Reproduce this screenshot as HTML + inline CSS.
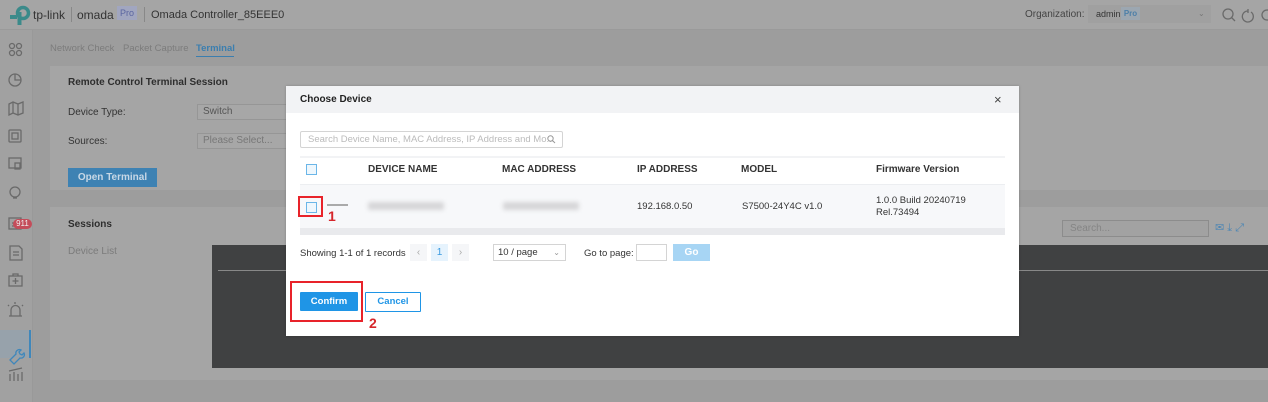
<!DOCTYPE html>
<html><head><meta charset="utf-8"><style>
*{box-sizing:border-box;margin:0;padding:0}
body{width:1268px;height:402px;overflow:hidden;font-family:"Liberation Sans",sans-serif;background:#9d9d9d;position:relative;font-size:11px;color:#333}
.abs{position:absolute}
.hdr{left:0;top:0;width:1268px;height:30px;background:#a5a5a5;border-bottom:1px solid #9a9a9a}
.side{left:0;top:30px;width:32px;height:372px;background:#a1a1a1}
.card{background:#a5a5a5}
.lbl{color:#333;font-size:10px}
.inp{background:#a7a7a7;border:1px solid #969696;height:16px;font-size:10px;color:#555;padding-left:5px;line-height:14px}
.modal{left:286px;top:86px;width:733px;height:250px;background:#fff;box-shadow:0 0 3px rgba(0,0,0,.2)}
.th{font-weight:bold;font-size:10px;color:#333;top:164px}
.cb{width:11px;height:11px;border:1px solid #6bb6e8;background:#eef7fd}
.blur{background:#d6d6d8;height:8px;filter:blur(2px);border-radius:2px}
.red{border:2px solid #e8232a}
.rn{color:#d6262b;font-weight:bold;font-size:14px}
.ic{stroke:#6a6a6a;fill:none;stroke-width:1.3}
</style></head><body>
<div class="abs hdr"></div>
<svg class="abs" style="left:9px;top:5px" width="22" height="20"><circle cx="14" cy="8" r="5.5" fill="none" stroke="#3b8a8a" stroke-width="3.5"/><rect x="8.5" y="7" width="4" height="13" fill="#3b8a8a"/><rect x="1" y="10" width="7" height="4" fill="#3b8a8a"/></svg>
<div class="abs" style="left:33px;top:8px;font-size:12px;color:#333">tp-link</div>
<div class="abs" style="left:71px;top:7px;width:1px;height:15px;background:#888"></div>
<div class="abs" style="left:77px;top:8px;font-size:12px;color:#333">omada</div>
<div class="abs" style="left:117px;top:6px;width:20px;height:14px;background:#a1a6c0;color:#5a65a0;font-size:9px;text-align:center;line-height:14px">Pro</div>
<div class="abs" style="left:144px;top:7px;width:1px;height:15px;background:#888"></div>
<div class="abs" style="left:151px;top:9px;font-size:11px;color:#333">Omada Controller_85EEE0</div>
<div class="abs" style="left:1025px;top:9px;font-size:10px;color:#444">Organization:</div>
<div class="abs" style="left:1088px;top:5px;width:123px;height:18px;background:#a0a0a0"></div>
<div class="abs" style="left:1096px;top:9px;font-size:9px;color:#333">admin</div>
<div class="abs" style="left:1121px;top:7px;width:19px;height:13px;background:#9ca7b1;color:#4c7fa8;font-size:8px;text-align:center;line-height:13px;font-weight:bold">Pro</div>
<div class="abs" style="left:1198px;top:9px;font-size:8px;color:#777">⌄</div>
<svg class="abs" style="left:1221px;top:7px" width="47" height="16"><circle cx="7" cy="7" r="5" class="ic"/><path d="M10.5 10.5 14 14" class="ic"/><path d="M27 4a5.5 5.5 0 1 0 3 1M27 2v4" class="ic"/><circle cx="46" cy="8" r="5" class="ic"/></svg>
<div class="abs side"></div>
<div class="abs" style="left:32px;top:30px;width:1px;height:372px;background:#999"></div>
<div class="abs" style="left:0;top:330px;width:31px;height:28px;background:#97a2ab;border-right:2px solid #3f87bb"></div>
<svg class="abs" style="left:6px;top:40px" width="20" height="345">
<g class="ic"><circle cx="6" cy="6" r="2.5"/><circle cx="13" cy="6" r="2.5"/><circle cx="6" cy="13" r="2.5"/><circle cx="13" cy="13" r="2.5"/>
<circle cx="9" cy="40" r="6"/><path d="M9 34v6h6"/>
<path d="M3 64l4-2 5 2 5-2v11l-5 2-5-2-4 2zM7 62v11M12 64v11"/>
<rect x="3" y="90" width="12" height="12" rx="1"/><rect x="6" y="93" width="6" height="6"/>
<rect x="3" y="118" width="12" height="10"/><rect x="9" y="123" width="5" height="6"/>
<circle cx="9" cy="152" r="5"/><path d="M7 158h4"/>
<rect x="3" y="178" width="12" height="11"/><path d="M6 183h6M6 186h6"/>
<path d="M4 206h9l3 3v11H4z M7 212h6M7 215h6"/>
<rect x="3" y="236" width="13" height="10"/><path d="M7 236v-2h5v2M9.5 238v6M6.5 241h6"/>
<path d="M3 276h13M5 276v-6a4.5 4.5 0 0 1 9 0v6M9 264v-2M3 266l-1-1M16 266l1-1"/>
<path d="M4 320l6-6a3.5 3.5 0 0 1 5-4l-2 2 1 2 2 1 2-2a3.5 3.5 0 0 1-4 5l-6 6z" stroke="#3f87bb"/>
<path d="M4 341v-7M8 341v-9M12 341v-7M16 341v-9M3 331l13-3"/></g></svg>
<div class="abs" style="left:13px;top:219px;width:19px;height:10px;background:#c44c5a;color:#eee;font-size:8px;border-radius:5px;text-align:center;line-height:10px">911</div>
<div class="abs" style="left:50px;top:43px;font-size:9.5px;color:#7c7c7c">Network Check</div>
<div class="abs" style="left:123px;top:43px;font-size:9.5px;color:#7c7c7c">Packet Capture</div>
<div class="abs" style="left:196px;top:43px;font-size:9.5px;color:#3b7eaf;font-weight:bold">Terminal</div>
<div class="abs" style="left:196px;top:56px;width:38px;height:1px;background:#3b7eaf"></div>
<div class="abs card" style="left:50px;top:66px;width:1218px;height:124px"></div>
<div class="abs" style="left:68px;top:77px;font-weight:bold;font-size:10px;color:#2e2e2e">Remote Control Terminal Session</div>
<div class="abs lbl" style="left:68px;top:107px">Device Type:</div>
<div class="abs inp" style="left:197px;top:104px;width:100px">Switch</div>
<div class="abs lbl" style="left:68px;top:136px">Sources:</div>
<div class="abs inp" style="left:197px;top:133px;width:100px;color:#777">Please Select...</div>
<div class="abs" style="left:68px;top:168px;width:89px;height:19px;background:#3e82b3;color:#c8d8e6;font-weight:bold;font-size:10px;text-align:center;line-height:19px">Open Terminal</div>
<div class="abs card" style="left:50px;top:207px;width:1218px;height:173px"></div>
<div class="abs" style="left:68px;top:219px;font-weight:bold;font-size:10px;color:#2e2e2e">Sessions</div>
<div class="abs" style="left:68px;top:246px;font-size:10px;color:#7b7b7b">Device List</div>
<div class="abs" style="left:1062px;top:220px;width:147px;height:17px;border:1px solid #8c8c8c;background:#a2a2a2;font-size:10px;color:#858585;padding-left:7px;line-height:15px">Search...</div>
<div class="abs" style="left:1215px;top:221px;font-size:11px;color:#4d86b4">✉ ⤓ ⤢</div>
<div class="abs" style="left:212px;top:245px;width:1056px;height:123px;background:#404142"></div>
<div class="abs" style="left:218px;top:270px;width:1050px;height:1px;background:#888"></div>
<div class="abs modal">
<div class="abs" style="left:0;top:0;width:733px;height:27px;background:#f2f3f5"></div>
<div class="abs" style="left:14px;top:8px;font-weight:bold;font-size:10px;color:#222">Choose Device</div>
<div class="abs" style="left:708px;top:6px;font-size:13px;color:#444">×</div>
<div class="abs" style="left:14px;top:45px;width:263px;height:17px;border:1px solid #d4d4d4;border-radius:2px;font-size:9.5px;color:#bbb;padding-left:7px;line-height:15px">Search Device Name, MAC Address, IP Address and Mo...</div>
<svg class="abs" style="left:261px;top:49px" width="9" height="9"><circle cx="3.5" cy="3.5" r="2.7" fill="none" stroke="#999"/><path d="M5.5 5.5 8 8" stroke="#999"/></svg>
<div class="abs" style="left:14px;top:70px;width:705px;height:2px;background:#f2f3f5"></div>
<div class="abs cb" style="left:20px;top:78px"></div>
<div class="abs" style="left:14px;top:98px;width:705px;height:44px;background:#f7f8fa;border-top:1px solid #eceef1"></div>
<div class="abs" style="left:14px;top:142px;width:705px;height:7px;background:#e9eaed"></div>
<div class="abs red" style="left:12px;top:110px;width:25px;height:21px"></div>
<div class="abs cb" style="left:20px;top:116px"></div>
<div class="abs" style="left:41px;top:118px;width:21px;height:2px;background:#aaa"></div>
<div class="abs rn" style="left:42px;top:122px">1</div>
<div class="abs blur" style="left:82px;top:116px;width:76px"></div>
<div class="abs blur" style="left:217px;top:116px;width:76px"></div>
<div class="abs" style="left:351px;top:115px;font-size:9.5px">192.168.0.50</div>
<div class="abs" style="left:456px;top:115px;font-size:9.5px">S7500-24Y4C v1.0</div>
<div class="abs" style="left:590px;top:109px;font-size:9.5px;line-height:12px">1.0.0 Build 20240719<br>Rel.73494</div>
</div>
<div class="abs th" style="left:368px">DEVICE NAME</div>
<div class="abs th" style="left:502px">MAC ADDRESS</div>
<div class="abs th" style="left:637px">IP ADDRESS</div>
<div class="abs th" style="left:741px">MODEL</div>
<div class="abs th" style="left:876px">Firmware Version</div>
<div class="abs" style="left:300px;top:248px;font-size:9.5px;color:#333">Showing 1-1 of 1 records</div>
<div class="abs" style="left:410px;top:244px;width:17px;height:17px;background:#f5f6f8;color:#aaa;text-align:center;line-height:17px;font-size:10px">‹</div>
<div class="abs" style="left:431px;top:244px;width:17px;height:17px;background:#e6f3fd;color:#3a9ae0;text-align:center;line-height:17px;font-size:10px">1</div>
<div class="abs" style="left:452px;top:244px;width:17px;height:17px;background:#f5f6f8;color:#aaa;text-align:center;line-height:17px;font-size:10px">›</div>
<div class="abs" style="left:493px;top:244px;width:73px;height:17px;border:1px solid #d4d4d4;font-size:9.5px;color:#333;padding-left:4px;line-height:15px">10 / page<span style="position:absolute;right:5px;color:#999;font-size:8px">⌄</span></div>
<div class="abs" style="left:584px;top:248px;font-size:9.5px;color:#333">Go to page:</div>
<div class="abs" style="left:636px;top:244px;width:31px;height:17px;border:1px solid #d4d4d4"></div>
<div class="abs" style="left:673px;top:244px;width:37px;height:17px;background:#a7d5f4;color:#fff;text-align:center;line-height:17px;font-size:10px;font-weight:bold">Go</div>
<div class="abs red" style="left:290px;top:281px;width:73px;height:41px"></div>
<div class="abs" style="left:300px;top:292px;width:58px;height:19px;background:#1f95e6;color:#fff;font-weight:bold;font-size:9.5px;text-align:center;line-height:19px;border-radius:1px">Confirm</div>
<div class="abs" style="left:365px;top:292px;width:56px;height:20px;border:1px solid #1f95e6;color:#1f95e6;font-weight:bold;font-size:9.5px;text-align:center;line-height:18px;border-radius:1px">Cancel</div>
<div class="abs rn" style="left:369px;top:315px">2</div>
</body></html>
